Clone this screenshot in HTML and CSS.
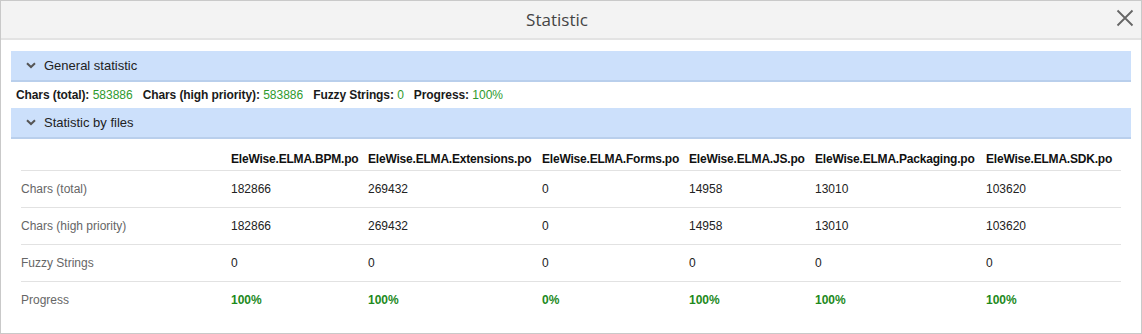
FILE: index.html
```html
<!DOCTYPE html>
<html>
<head>
<meta charset="utf-8">
<link rel="stylesheet" href="styles.css">
</head>
<body>
<div class="dialog">
  <div class="titlebar">
    <span class="title">Statistic</span>
    <svg class="close" width="18" height="18" viewBox="0 0 18 18"><path d="M1.5 1.5 L16.5 16.5 M16.5 1.5 L1.5 16.5" stroke="#666" stroke-width="1.8" fill="none"/></svg>
  </div>
  <div class="content">
    <div class="section-head">
      <svg class="chev" width="10" height="7" viewBox="0 0 10 7"><path d="M1 1.2 L5 5 L9 1.2" stroke="#555" stroke-width="2" fill="none"/></svg>
      <span>General statistic</span>
    </div>
    <div class="stats">
      <span class="stat"><b>Chars (total):</b> <span class="val">583886</span></span>
      <span class="stat"><b>Chars (high priority):</b> <span class="val">583886</span></span>
      <span class="stat"><b>Fuzzy Strings:</b> <span class="val">0</span></span>
      <span class="stat"><b>Progress:</b> <span class="val">100%</span></span>
    </div>
    <div class="section-head">
      <svg class="chev" width="10" height="7" viewBox="0 0 10 7"><path d="M1 1.2 L5 5 L9 1.2" stroke="#555" stroke-width="2" fill="none"/></svg>
      <span>Statistic by files</span>
    </div>
    <table class="files">
      <colgroup>
        <col class="c0"><col class="c1"><col class="c2"><col class="c3"><col class="c4"><col class="c5"><col class="c6">
      </colgroup>
      <thead>
        <tr>
          <th></th>
          <th>EleWise.ELMA.BPM.po</th>
          <th>EleWise.ELMA.Extensions.po</th>
          <th>EleWise.ELMA.Forms.po</th>
          <th>EleWise.ELMA.JS.po</th>
          <th>EleWise.ELMA.Packaging.po</th>
          <th>EleWise.ELMA.SDK.po</th>
        </tr>
      </thead>
      <tbody>
        <tr>
          <td class="lbl">Chars (total)</td>
          <td>182866</td><td>269432</td><td>0</td><td>14958</td><td>13010</td><td>103620</td>
        </tr>
        <tr>
          <td class="lbl">Chars (high priority)</td>
          <td>182866</td><td>269432</td><td>0</td><td>14958</td><td>13010</td><td>103620</td>
        </tr>
        <tr>
          <td class="lbl">Fuzzy Strings</td>
          <td>0</td><td>0</td><td>0</td><td>0</td><td>0</td><td>0</td>
        </tr>
        <tr class="last">
          <td class="lbl">Progress</td>
          <td class="pct">100%</td><td class="pct">100%</td><td class="pct">0%</td><td class="pct">100%</td><td class="pct">100%</td><td class="pct">100%</td>
        </tr>
      </tbody>
    </table>
  </div>
</div>
</body>
</html>
```

FILE: styles.css
```css
html, body {
  margin: 0;
  padding: 0;
  background: #ffffff;
}

.dialog {
  width: 1142px;
  height: 334px;
  box-sizing: border-box;
  border: 1px solid #c9c9c9;
  background: #ffffff;
  font-family: "Liberation Sans", Arial, sans-serif;
  color: #222;
}

.titlebar {
  position: relative;
  height: 37px;
  background: #f3f3f3;
  border-bottom: 2px solid #e3e3e3;
  display: flex;
  align-items: center;
  justify-content: center;
  padding-right: 28px;
}

.title {
  font-family: "Open Sans", "Noto Sans", sans-serif;
  font-size: 17px;
  color: #444;
}

.close {
  position: absolute;
  right: 7px;
  top: 8px;
}

.content {
  padding: 11px 10px 0 10px;
}

.section-head {
  height: 29px;
  background: #cce0fb;
  border-bottom: 2px solid #b9cfec;
  display: flex;
  align-items: center;
  padding-left: 15px;
  font-size: 13px;
  color: #222;
}

.chev {
  margin-right: 8px;
}

.stats {
  height: 26px;
  display: flex;
  align-items: center;
  padding-left: 5px;
  font-size: 12px;
  gap: 10px;
}

.stats b {
  color: #1a1a1a;
  letter-spacing: -0.1px;
}

.val {
  color: #2e9a2e;
}

.files {
  margin-left: 10px;
  width: 1100px;
  border-collapse: collapse;
  table-layout: fixed;
  font-size: 12px;
}

.c0 { width: 210px; }
.c1 { width: 137px; }
.c2 { width: 174px; }
.c3 { width: 147px; }
.c4 { width: 126px; }
.c5 { width: 171px; }
.c6 { width: 135px; }

.files th {
  text-align: left;
  font-weight: bold;
  color: #111;
  height: 31px;
  padding: 10px 0 0 0;
  box-sizing: border-box;
  border-bottom: 1px solid #e2e2e2;
  white-space: nowrap;
  letter-spacing: -0.2px;
}

.files td {
  height: 37px;
  padding: 0;
  box-sizing: border-box;
  border-bottom: 1px solid #e2e2e2;
  color: #222;
}

.files tr.last td {
  border-bottom: none;
}

.files td.lbl {
  color: #666;
}

.files td.pct {
  color: #1d8a1d;
  font-weight: bold;
}
```
